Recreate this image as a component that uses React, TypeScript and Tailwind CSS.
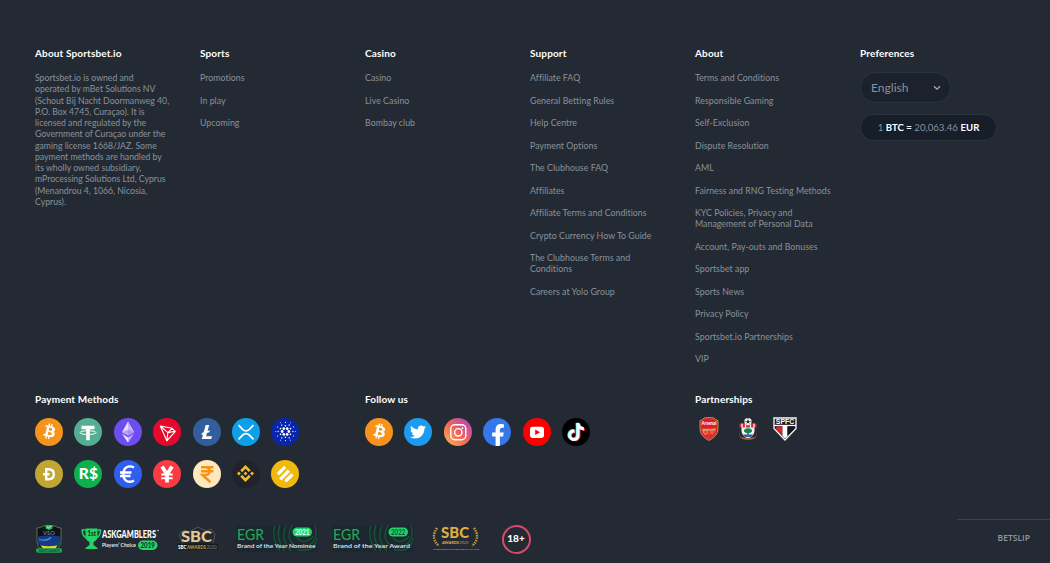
import React from "react";
import { FaTwitter, FaFacebookF, FaTiktok } from "react-icons/fa";
import { SiBitcoin, SiBinance, SiCardano } from "react-icons/si";

const sports = ["Promotions", "In play", "Upcoming"];
const casino = ["Casino", "Live Casino", "Bombay club"];
const support = [
  "Affiliate FAQ",
  "General Betting Rules",
  "Help Centre",
  "Payment Options",
  "The Clubhouse FAQ",
  "Affiliates",
  "Affiliate Terms and Conditions",
  "Crypto Currency How To Guide",
  "The Clubhouse Terms and\nConditions",
  "Careers at Yolo Group",
];
const about = [
  "Terms and Conditions",
  "Responsible Gaming",
  "Self-Exclusion",
  "Dispute Resolution",
  "AML",
  "Fairness and RNG Testing Methods",
  "KYC Policies, Privacy and\nManagement of Personal Data",
  "Account, Pay-outs and Bonuses",
  "Sportsbet app",
  "Sports News",
  "Privacy Policy",
  "Sportsbet.io Partnerships",
  "VIP",
];

const company = `Sportsbet.io is owned and
operated by mBet Solutions NV
(Schout Bij Nacht Doormanweg 40,
P.O. Box 4745, Curaçao). It is
licensed and regulated by the
Government of Curaçao under the
gaming license 1668/JAZ. Some
payment methods are handled by
its wholly owned subsidiary,
mProcessing Solutions Ltd, Cyprus
(Menandrou 4, 1066, Nicosia,
Cyprus).`;

function Heading({ children }: { children: React.ReactNode }) {
  return (
    <h3 className="text-[10px] leading-[14px] font-bold tracking-[0.14px] text-white whitespace-nowrap">
      {children}
    </h3>
  );
}

function LinkColumn({ title, links }: { title: string; links: string[] }) {
  return (
    <div className="w-[165px] shrink-0">
      <Heading>{title}</Heading>
      <ul className="mt-[12px] flex flex-col gap-[11.25px]">
        {links.map((link) => (
          <li key={link}>
            <a className="block whitespace-pre">{link}</a>
          </li>
        ))}
      </ul>
    </div>
  );
}

function Coin({ className, children }: { className: string; children: React.ReactNode }) {
  return (
    <div
      className={`flex size-[28px] shrink-0 items-center justify-center overflow-hidden rounded-full text-white ${className}`}
    >
      {children}
    </div>
  );
}

function Bitcoin() {
  return (
    <Coin className="bg-[#f7931a]">
      {/* white disc shows through the cut-out of the icon */}
      <div className="flex size-[20px] items-center justify-center rounded-full bg-white">
        <SiBitcoin className="size-[25px] shrink-0 text-[#f7931a]" />
      </div>
    </Coin>
  );
}

function Glyph({ children }: { children: React.ReactNode }) {
  return (
    <svg viewBox="0 0 28 28" className="size-[28px]" fill="none">
      {children}
    </svg>
  );
}

function PaymentMethods() {
  return (
    <div className="mt-[11.5px] flex w-[276px] flex-wrap gap-x-[11.4px] gap-y-[14px]">
      <Bitcoin />
      <Coin className="bg-[#53ae94]">
        <Glyph>
          <path d="M7.5 7.8h13v3.4h-4.7v11h-3.6v-11H7.5z" fill="#fff" />
          <ellipse cx="14" cy="14.6" rx="8" ry="1.9" stroke="#fff" strokeWidth="1" />
        </Glyph>
      </Coin>
      <Coin className="bg-[#6f4bf2]">
        <Glyph>
          <path d="M14 3.5 8 14.2l6 3.4 6-3.4z" fill="#e6dffd" />
          <path d="M14 3.5v14.1l6-3.4z" fill="#c4b4fa" />
          <path d="M14 11.4 8 14.2l6 3.4 6-3.4z" fill="#8d70ef" fillOpacity=".55" />
          <path d="m8 15.8 6 8.9v-5.3z" fill="#eee9fe" />
          <path d="m20 15.8-6 8.9v-5.3z" fill="#c4b4fa" />
        </Glyph>
      </Coin>
      <Coin className="bg-[#e50a2b]">
        <Glyph>
          <path
            d="m7.3 8 11.8 2.3 3.2 3-8.5 9.5zM7.3 8l7.6 6.6-1.1 8.2M14.9 14.6l4.2-4.3M14.9 14.6l7.4-1.3"
            stroke="#fff"
            strokeWidth="1.1"
            strokeLinejoin="round"
          />
        </Glyph>
      </Coin>
      <Coin className="bg-[#345d9d]">
        <Glyph>
          <path
            d="M12.7 7h3.5l-1.6 6 2.3-.8-.6 2-2.3.9-.9 3.2h5.9l-.8 2.8H8.8l1.2-4.7-1.6.6.6-2 1.6-.7z"
            fill="#fff"
          />
        </Glyph>
      </Coin>
      <Coin className="bg-[#0d9fe8]">
        <Glyph>
          <path
            d="m6.5 7.2 4.1 4.2c2 2 4.8 2 6.8 0l4.1-4.2M6.5 21.4l4.1-4.2c2-2 4.8-2 6.8 0l4.1 4.2"
            stroke="#fff"
            strokeWidth="1.8"
          />
        </Glyph>
      </Coin>
      <Coin className="bg-[#0726ac]">
        <SiCardano className="size-[21px]" />
      </Coin>
      <Coin className="bg-[#c2a633]">
        <Glyph>
          <path
            d="M11.2 9.2h2.3c3.4 0 5.3 1.7 5.3 5s-2 5-5.3 5h-2.3zM8 14.2h6.5"
            stroke="#fff"
            strokeWidth="2.4"
          />
        </Glyph>
      </Coin>
      <Coin className="bg-[#0db14b]">
        <span className="text-[15.5px] leading-none font-black">R$</span>
      </Coin>
      <Coin className="bg-[#305ff0]">
        <Glyph>
          <path
            d="M20 7.6C14.6 4.6 9.3 7.6 9.3 14.2s5.3 9.4 10.7 6.2M6 12.5h11.5M6 16h10.5"
            stroke="#fff"
            strokeWidth="2.3"
          />
        </Glyph>
      </Coin>
      <Coin className="bg-[#fb3b43]">
        <Glyph>
          <path d="m9 6.5 5 8 5-8M14 14v8.5" stroke="#fff" strokeWidth="3.7" />
          <path d="M8.3 14.4h11.4M8.3 18.2h11.4" stroke="#fff" strokeWidth="2" />
        </Glyph>
      </Coin>
      <Coin className="bg-[#ffe8bd]">
        <Glyph>
          <path
            d="M8 7.3h12.4M8 11.3h12.4M8.5 7.3h3.8c5.7 0 5.7 7.7 0 7.7H9.5l8 7.2"
            stroke="#f7931a"
            strokeWidth="2.5"
          />
        </Glyph>
      </Coin>
      <Coin className="bg-[#20242a]">
        <SiBinance className="size-[17px] text-[#f3ba2f]" />
      </Coin>
      <Coin className="bg-[#f0b90b]">
        <Glyph>
          <path
            d="m13 5.7 2.3 2.3-7.3 7.3L5.7 13zM16.8 9.4l2.3 2.3-8.8 8.8L8 18.200zM20.300 13.200l2.300 2.300-7.100 7.100-2.300-2.300z"
            fill="#fff"
          />
        </Glyph>
      </Coin>
    </div>
  );
}

function Socials() {
  return (
    <div className="mt-[11.5px] flex gap-[11.4px]">
      <Bitcoin />
      <Coin className="bg-[#1d9bf0]">
        <FaTwitter className="size-[16px]" />
      </Coin>
      <Coin className="bg-linear-to-tr from-[#fdbb45] via-[#f0605a] to-[#a536c0]">
        <Glyph>
          <rect x="6.8" y="6.8" width="15" height="15" rx="4" stroke="#fff" strokeWidth="1.4" />
          <circle cx="14.3" cy="14.3" r="3.7" stroke="#fff" strokeWidth="1.4" />
          <circle cx="18.5" cy="10.2" r=".9" fill="#fff" />
        </Glyph>
      </Coin>
      <Coin className="bg-[#3578ea]">
        <FaFacebookF className="mt-[7px] ml-[2px] size-[22px] shrink-0" />
      </Coin>
      <Coin className="bg-[#fe0000]">
        <Glyph>
          <rect x="7" y="8.7" width="14" height="11.3" rx="2.4" fill="#fff" />
          <path d="m12.2 11.5 4.8 2.8-4.8 2.8z" fill="#fe0000" />
        </Glyph>
      </Coin>
      <Coin className="bg-black">
        <div className="grid *:col-start-1 *:row-start-1">
          <FaTiktok className="relative size-[18px] -translate-x-[0.8px] -translate-y-[0.5px] text-[#25f4ee]" />
          <FaTiktok className="relative size-[18px] translate-x-[0.9px] translate-y-[0.6px] text-[#fe2c55]" />
          <FaTiktok className="relative size-[18px]" />
        </div>
      </Coin>
    </div>
  );
}

function Partners() {
  return (
    <div className="mt-[11px] flex h-[28px] items-start pl-[4px]">
      <svg viewBox="0 0 20 24" className="h-[24px] w-[20px]" fontFamily="Lato, sans-serif">
        <path d="M1 3.5Q4 3 5 1q5-1 10 0 1 2 4 2.5V12q0 7-9 11.5Q1 19 1 12z" fill="#d91f28" stroke="#ad9457" />
        <path d="M2.5 11v2q1 5.5 7.5 9 6.5-3.500 7.500-9v-2z" fill="#e63a30" />
        <text x="2.5" y="8.3" fontSize="5" fontWeight="700" textLength="15" lengthAdjust="spacingAndGlyphs" fill="#fff">
          Arsenal
        </text>
        <path d="M3.5 12h10l3-.8v2.3H9l-5.5 1z" fill="#cba660" />
        <circle cx="6.5" cy="15" r="2" fill="none" stroke="#cba660" />
        <circle cx="13" cy="14.8" r="1.3" fill="none" stroke="#cba660" strokeWidth=".7" />
        <path d="M7 19h6" stroke="#bd2026" />
      </svg>
      <svg viewBox="0 0 20 24" className="ml-[19px] h-[24px] w-[20px]">
        <path d="M3.5 9h13v5q0 4.5-6.5 8-6.5-3.5-6.5-8z" fill="#f0f0f0" />
        <path d="M1.5 6.5h17v4h-17z" fill="#d62839" />
        <path d="M4 6.5v4M7.5 6.5v4M12.5 6.5v4M16 6.5v4" stroke="#fff" strokeWidth="1.2" />
        <circle cx="10" cy="4.6" r="3.7" fill="#f4f4f4" />
        <path d="m10 3 1.6 1.2-.6 1.9H9l-.6-1.9z" fill="#20242b" />
        <path d="M10 .9v1.4M6.5 4.6h1.2M12.3 4.6h1.2M7.9 7.5l.7-1M12.1 7.5l-.7-1" stroke="#20242b" strokeWidth=".8" />
        <path d="M10 12v6" stroke="#5d4727" strokeWidth="1.4" />
        <path d="M6 14.5q-.5-2.8 4-3.2 4.5.4 4 3.2L12 16H8z" fill="#16824a" />
        <path d="M5 17.5h10L13 20H7z" fill="#2864a5" />
        <path d="M1 14.5q.5 4.5 3.5 6l-1.5 1q-2.500-2-2-7zM19 14.5q-.5 4.5-3.5 6l1.5 1q2.500-2 2-7z" fill="#8d3038" />
        <path d="M3 19.5q7 3 14 0l-1 2.5q-6 2-12 0z" fill="#8d3038" />
        <path d="M4 21q6 2 12 0" fill="none" stroke="#cfb263" strokeWidth=".9" strokeDasharray="1 .6" />
      </svg>
      <svg viewBox="0 0 24 24" className="ml-[14.5px] h-[24px] w-[24px]" fontFamily="'Liberation Sans', sans-serif">
        <path d="M1 1h22v10.500L12 23 1 11.500z" fill="#171b22" stroke="#f8f8f8" strokeWidth="1.3" />
        <text x="2.8" y="7" fontSize="6.5" fontWeight="700" textLength="18.5" lengthAdjust="spacingAndGlyphs" fill="#fff">
          SPFC
        </text>
        <path d="M1 8.5h22" stroke="#fff" strokeWidth="1.3" />
        <path d="M3.2 9.5h6.300v9l-6.300-6z" fill="#e42227" />
        <path d="M9.500 9v10l2.500 2.500 2.500-2.500V9z" fill="#fff" />
        <path d="M14.500 9.500h6.200v3l-6.200 6z" fill="#161a20" />
      </svg>
    </div>
  );
}

type EgrProps = { year: string; text: string; width: number; dark?: boolean };

function EgrBadge({ year, text, width, dark }: EgrProps) {
  return (
    <svg viewBox="0 0 82 30" className="h-[30px] w-[82px] overflow-visible" fontFamily="Lato, sans-serif">
      <rect width="82" height="27" y="1" fill="#1c2830" />
      <g fill="none" stroke="#17533a" strokeWidth="1.3">
        <path d="M39 1q-4 13 5 26M44 1q-5 14 5 26M50 1q-6 15 5 26M56 1q-8 16 6 22 9 2 15-5 5-8 2-17M61 13q3 6 9 4 6-2 7-5M62 26h10q8-2 9-12" />
      </g>
      <text x="1" y="16" fontSize="14.5" textLength="27" lengthAdjust="spacingAndGlyphs" fill="#20ad5a">
        EGR
      </text>
      <rect x="56.5" y="3.5" width="19.5" height="9" rx="4.5" fill="#19d66a" />
      <text
        x="59"
        y="10.6"
        fontSize="7"
        fontWeight="700"
        textLength="14.5"
        lengthAdjust="spacingAndGlyphs"
        fill={dark ? "#12502d" : "#f2fff7"}
      >
        {year}
      </text>
      <text
        x="1"
        y="24"
        fontSize="6"
        fontWeight="700"
        textLength={width}
        lengthAdjust="spacingAndGlyphs"
        fill="#d6dde0"
      >
        {text}
      </text>
    </svg>
  );
}

function Awards() {
  return (
    <div className="mt-[36.5px] flex h-[30px] items-center">
      <svg viewBox="0 0 28 30" className="h-[30px] w-[28px] overflow-visible" fontFamily="Lato, sans-serif">
        <path d="M2 4q4 0 6-2h12q2 2 6 2v12q0 7-5 9H7q-5-2-5-9z" fill="#0b1219" stroke="#7e8250" strokeWidth=".8" />
        <path d="M2.500 12.500q11-2 23 0v4q0 4-2 6H6q-3.500-3-3.500-6z" fill="#153b84" />
        <path d="M4 15.500q8 2 12-2" fill="none" stroke="#6085ca" strokeWidth="1.2" />
        <path d="M5.500 21.500q8 1.500 17 0l-2 3H8z" fill="#e2d43f" />
        <path d="M10.500 1h7v3.500L14 6l-3.500-1.500z" fill="#24bf5d" />
        <path d="m12 2.700 1.500 1.300 2.500-2" stroke="#fff" strokeWidth=".7" fill="none" />
        <text x="8" y="10.5" fontSize="5" fontWeight="700" textLength="12" lengthAdjust="spacingAndGlyphs" fill="#667487">
          VSO
        </text>
        <rect x="1" y="24.3" width="26" height="4.4" rx="2" fill="#22a457" />
        <text x="3.5" y="27.6" fontSize="3" fontWeight="700" textLength="21" lengthAdjust="spacingAndGlyphs" fill="#12482b">
          WEBSITE AWARDS
        </text>
      </svg>
      <svg viewBox="0 0 80 30" className="ml-[18px] h-[30px] w-[80px] overflow-visible" fontFamily="Lato, sans-serif">
        <path d="M4.500 4.500h12v7q0 5-4 6.500v3l4 3v1h-12v-1l4-3v-3q-4-1.500-4-6.500z" fill="#25d366" />
        <path d="M4.500 6H1.200q0 7 5.300 8.500M16.500 6h3q0 7-5.300 8.500" fill="none" stroke="#25d366" strokeWidth="1.5" />
        <text x="6.5" y="11.5" fontSize="6.5" fontWeight="900" textLength="8.5" lengthAdjust="spacingAndGlyphs" fill="#153325">
          1st
        </text>
        <text x="21" y="14" fontSize="12" fontWeight="900" textLength="54" lengthAdjust="spacingAndGlyphs" fill="#fff">
          ASKGAMBLERS
        </text>
        <circle cx="77" cy="6.5" r=".7" fill="#fff" />
        <text x="21" y="23.3" fontSize="6" fontWeight="700" textLength="34" lengthAdjust="spacingAndGlyphs" fill="#e3e6e8">
          Players’ Choice
        </text>
        <rect x="57" y="16.5" width="19.5" height="9.5" rx="4.7" fill="#25d366" />
        <text x="59.5" y="23.8" fontSize="7" fontWeight="900" textLength="14.5" lengthAdjust="spacingAndGlyphs" fill="#173226">
          2019
        </text>
      </svg>
      <svg viewBox="0 0 42 30" className="ml-[16px] h-[30px] w-[42px] overflow-visible" fontFamily="Lato, sans-serif">
        <path d="m3 9 5-3 4 2 9-5 8 4 5-2 4 5-2 10M6 20 2 10" fill="none" stroke="#777057" strokeWidth=".6" />
        <text x="4" y="17.5" fontSize="15.5" fontWeight="900" textLength="31" lengthAdjust="spacingAndGlyphs" fill="#e2c993">
          SBC
        </text>
        <rect x=".5" y="19.5" width="40.5" height="6" fill="#101820" />
        <text x="1" y="24.6" fontSize="5" fontWeight="900" textLength="8.5" lengthAdjust="spacingAndGlyphs" fill="#fff">
          SBC
        </text>
        <text x="10" y="24.6" fontSize="5" fontWeight="900" textLength="19" lengthAdjust="spacingAndGlyphs" fill="#c79b38">
          AWARDS
        </text>
        <text x="29.500" y="24.6" fontSize="5" textLength="10.5" lengthAdjust="spacingAndGlyphs" fill="#8e8b82">
          2020
        </text>
      </svg>
      <div className="ml-[17px] flex gap-[13.5px]">
        <EgrBadge year="2021" text="Brand of the Year Nominee" width={78.5} />
        <EgrBadge year="2022" text="Brand of the Year Award" width={77} dark />
      </div>
      <svg viewBox="0 0 50 30" className="ml-[17px] h-[30px] w-[50px] overflow-visible" fontFamily="Lato, sans-serif">
        <text x="10" y="13.5" fontSize="15" fontWeight="900" textLength="28" lengthAdjust="spacingAndGlyphs" fill="#dfae43">
          SBC
        </text>
        <text x="11" y="19.5" fontSize="4.5" fontStyle="italic" fontWeight="900" textLength="17" lengthAdjust="spacingAndGlyphs" fill="#d9ad46">
          AWARDS
        </text>
        <text x="28.500" y="19.5" fontSize="4.5" fontStyle="italic" textLength="9" lengthAdjust="spacingAndGlyphs" fill="#aaa897">
          2020
        </text>
        <g fill="none" stroke="#c69a39" strokeWidth="2.4" strokeDasharray="1.5 1">
          <path d="M6 4Q-1 14 8 22" />
          <path d="M43 4q7 10-2 18" />
        </g>
        <text x="2" y="26.3" fontSize="2.500" fontWeight="700" textLength="46" lengthAdjust="spacingAndGlyphs" fill="#a8adb1">
          SPORTS BETTING OPERATOR OF THE YEAR
        </text>
      </svg>
      <div className="ml-[21px] flex size-[29px] items-center justify-center rounded-full border-2 border-[#d94b68] text-[10px] font-black text-white">
        18+
      </div>
    </div>
  );
}

export default function App() {
  return (
    <div className="relative h-[563px] w-[1050px] overflow-hidden bg-[#232a33] font-['Lato',sans-serif] text-[8.8px] leading-[11.25px] tracking-[0.03px] text-[#89929b]">
      <footer className="pt-[46px] pl-[35px]">
        <div className="flex h-[346px]">
          <div className="w-[165px] shrink-0">
            <Heading>About Sportsbet.io</Heading>
            <p className="mt-[12px] text-[8.700px] tracking-normal whitespace-pre">{company}</p>
          </div>
          <LinkColumn title="Sports" links={sports} />
          <LinkColumn title="Casino" links={casino} />
          <LinkColumn title="Support" links={support} />
          <LinkColumn title="About" links={about} />
          <div>
            <Heading>Preferences</Heading>
            <button className="mt-[12px] flex h-[31px] w-[91px] items-center justify-between rounded-full border border-[#2b333d] bg-[#1b212d] pr-[9px] pl-[10px] text-[12px]">
              English
              <svg viewBox="0 0 8 6" className="h-[6px] w-[8px]" fill="none">
                <path d="m1 1.2 3 3 3-3" stroke="#a4abb2" strokeWidth="1.3" />
              </svg>
            </button>
            <div className="mt-[11px] flex h-[27px] w-[137px] items-center justify-center rounded-full border border-[#2b333d] bg-[#171d29] text-[9.6px] whitespace-pre">
              1 <b className="text-white">BTC = </b>20,063.46 <b className="text-white">EUR</b>
            </div>
          </div>
        </div>
        <div className="flex">
          <div className="w-[330px]">
            <Heading>Payment Methods</Heading>
            <PaymentMethods />
          </div>
          <div className="w-[330px]">
            <Heading>Follow us</Heading>
            <Socials />
          </div>
          <div>
            <Heading>Partnerships</Heading>
            <Partners />
          </div>
        </div>
        <Awards />
      </footer>
      {/* Betslip tab pinned to the corner */}
      <div className="absolute right-0 bottom-0 flex h-[44px] w-[93px] items-center justify-end border-t border-[#3a424b] pr-[20px] pb-[8px] font-['Open_Sans',sans-serif] text-[8.5px] font-semibold text-[#8f989f]">
        BETSLIP
      </div>
    </div>
  );
}
